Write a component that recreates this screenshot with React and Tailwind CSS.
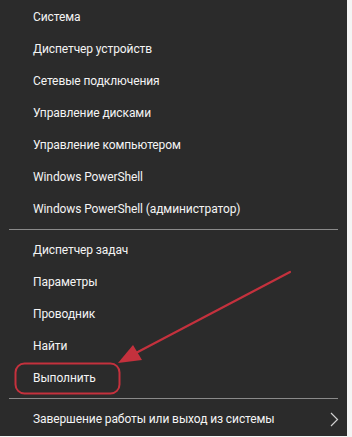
const TOP = [
  "Система",
  "Диспетчер устройств",
  "Сетевые подключения",
  "Управление дисками",
  "Управление компьютером",
  "Windows PowerShell",
  "Windows PowerShell (администратор)",
];

const MID = ["Диспетчер задач", "Параметры", "Проводник", "Найти", "Выполнить"];

function Item({ label, children }) {
  return (
    <div className="flex h-8 items-center justify-between pl-[33px] pr-[8px] text-[12px] tracking-[-0.1px] text-[#f4f4f4]">
      <span>{label}</span>
      {children}
    </div>
  );
}

function Divider() {
  return (
    <div className="flex h-[9px] items-center px-[9px]">
      <div className="h-px w-full bg-[#8a8a8a]" />
    </div>
  );
}

export default function App() {
  return (
    <div
      className="relative flex h-[437px] w-[352px] bg-[#f4f4f4]"
      style={{ fontFamily: 'Roboto, "Noto Sans", sans-serif' }}
    >
      <div className="flex h-[436px] w-[347px] flex-col bg-[#2b2b2b] pt-px">
        {TOP.map((t) => (
          <Item key={t} label={t} />
        ))}
        <Divider />
        {MID.map((t) => (
          <Item key={t} label={t} />
        ))}
        <Divider />
        <Item label="Завершение работы или выход из системы">
          <svg width="9" height="15" viewBox="0 0 9 15" className="text-[#d0d0d0]">
            <path d="M1 1l6.5 6.5L1 14" fill="none" stroke="currentColor" strokeWidth="1.2" />
          </svg>
        </Item>
      </div>

      {/* annotation: arrow + highlight */}
      <svg className="absolute left-0 top-0" width="352" height="437" viewBox="0 0 352 437">
        <rect x="15.5" y="363.5" width="104" height="30" rx="9" fill="none" stroke="#c4313d" strokeWidth="2" />
        <line x1="290" y1="272" x2="134" y2="354" stroke="#c4313d" strokeWidth="2.2" strokeLinecap="round" />
        <polygon points="118,363 133,345 142,360" fill="#c4313d" />
      </svg>
    </div>
  );
}
